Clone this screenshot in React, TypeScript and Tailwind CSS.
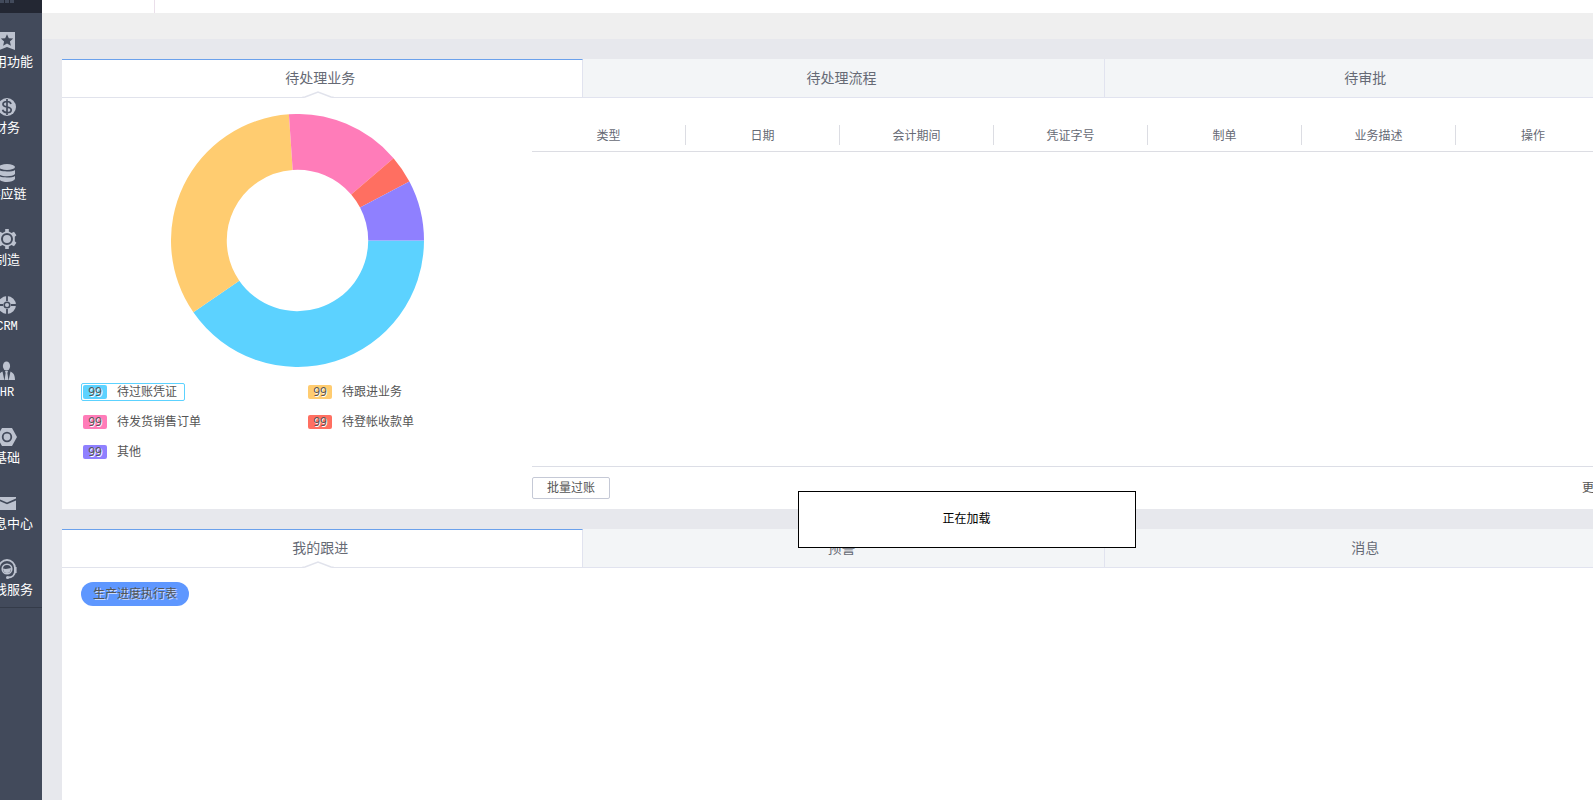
import type { ReactNode } from "react";

const slices = [
  { label: "待过账凭证", value: 1454, color: "#5cd2ff", badge: "bg-[#5cd2ff]" },
  { label: "待跟进业务", value: 1207, color: "#ffcc70", badge: "bg-[#ffcc70]" },
  { label: "待发货销售订单", value: 533, color: "#ff7cb9", badge: "bg-[#ff7cb9]" },
  { label: "待登帐收款单", value: 128, color: "#ff6f61", badge: "bg-[#ff6f61]" },
  { label: "其他", value: 278, color: "#8f80ff", badge: "bg-[#8f80ff]" },
];

const columns = ["类型", "日期", "会计期间", "凭证字号", "制单", "业务描述", "操作"];

const menu: { label: string; latin?: boolean; icon: ReactNode }[] = [
  {
    label: "常用功能",
    icon: (
      <path
        fillRule="evenodd"
        d="M2 1h16v18l-8-3-8 3zM10 3.200 8.200 7.200l-4.400.4 3.300 2.900-1 4.300L10 12.500l3.900 2.300-1-4.300 3.300-2.900-4.400-.4z"
      />
    ),
  },
  {
    label: "财务",
    icon: (
      <>
        <circle cx="10" cy="10" r="9" />
        <path
          d="M14 7c-.4-1.700-1.800-2.500-4-2.500S6 5.500 6 7.200s1.500 2.300 4 2.800 4.200 1.100 4.200 2.900-1.700 2.700-4.200 2.700-4-1-4.400-2.800M10 2v16"
          fill="none"
          stroke="#424a5b"
          strokeWidth="1.7"
        />
      </>
    ),
  },
  {
    label: "供应链",
    icon: (
      <>
        <ellipse cx="10" cy="4" rx="8" ry="3" />
        <path d="M2 7c2 2 14 2 16 0v4c-2 3-14 3-16 0z" />
        <path d="M2 13c2 2 14 2 16 0v3c-2 4-14 4-16 0z" />
      </>
    ),
  },
  {
    label: "制造",
    icon: (
      <>
        <path
          fillRule="evenodd"
          d="M8.200 0h3.600v2.400l2.700 1.500L17 2.800l2.400 3.400-1.600 1.600v4.400l1.600 1.600L17 17.200l-2.500-1.100-2.700 1.500V20H8.200v-2.400l-2.700-1.500L3 17.200.6 13.800l1.600-1.600V7.800L.6 6.200 3 2.800l2.500 1.100 2.700-1.500zM10 4a6 6 0 1 0 0 12 6 6 0 0 0 0-12z"
        />
        <circle cx="10" cy="10" r="4" />
      </>
    ),
  },
  {
    label: "CRM",
    latin: true,
    icon: (
      <>
        <circle cx="10" cy="10" r="6.3" fill="none" stroke="#bcc2cf" strokeWidth="5.4" />
        <path d="M10 0v6M10 14v6M0 10h6M14 10h6" stroke="#424a5b" strokeWidth="1.8" />
        <circle cx="10" cy="10" r="2" />
      </>
    ),
  },
  {
    label: "HR",
    latin: true,
    icon: (
      <>
        <ellipse cx="9.5" cy="5" rx="3.6" ry="4.6" />
        <path d="M8 10h3l-.6 2 1 7H7.600l1-7z" />
        <path d="M5.500 10.500 7.300 19H1c0-4 1-7 4.500-8.500zM13.500 10.500 11.700 19H18c0-4-1-7-4.500-8.500z" />
      </>
    ),
  },
  {
    label: "基础",
    icon: (
      <>
        <path fillRule="evenodd" d="M5 1h10l5 9-5 9H5l-5-9zM10 4.800a5.200 5.200 0 1 0 0 10.400 5.200 5.200 0 0 0 0-10.400z" />
        <circle cx="10" cy="10" r="3.4" />
      </>
    ),
  },
  {
    label: "消息中心",
    icon: (
      <>
        <path d="M1 4h18v1.500l-9 4-9-4z" />
        <path d="M1 7.500l9 3.700 9-3.700V17H1z" />
      </>
    ),
  },
  {
    label: "在线服务",
    icon: (
      <>
        <path d="M2 12V9a8 8 0 0 1 16 0v3M18 12c0 4-3 6.500-7 6.500" fill="none" stroke="#bcc2cf" strokeWidth="1.8" />
        <path d="M17 8h2.600v6H17zM.4 8H3v6H.4z" />
        <circle cx="10" cy="10" r="4.8" fill="none" stroke="#bcc2cf" strokeWidth="1.6" />
        <path d="M6 9.500c3 1 6 0 8-.5 0 3-1.500 5-4 5s-4-2-4-4.500z" />
        <circle cx="10.5" cy="18.5" r="1.5" />
      </>
    ),
  },
];

function Donut() {
  const total = slices.reduce((sum, s) => sum + s.value, 0);
  const outer = 127;
  const inner = 71;
  let start = 0;
  return (
    <svg width="253" height="253" viewBox="-127 -127 254 254" role="img" aria-label="待处理业务" className="mx-auto">
      {slices.map((s) => {
        const end = start + (s.value / total) * Math.PI * 2;
        const large = end - start > Math.PI ? 1 : 0;
        const at = (r: number, a: number) => `${r * Math.cos(a)} ${r * Math.sin(a)}`;
        const d = `M${at(outer, start)}A${outer} ${outer} 0 ${large} 1 ${at(outer, end)}L${at(inner, end)}A${inner} ${inner} 0 ${large} 0 ${at(inner, start)}Z`;
        start = end;
        return <path key={s.label} d={d} fill={s.color} />;
      })}
    </svg>
  );
}

function Tabs({ items }: { items: string[] }) {
  return (
    <div role="tablist" className="grid h-[39px] grid-cols-3 text-sm text-[#666a75]">
      {items.map((item, i) =>
        i === 0 ? (
          <button
            key={item}
            role="tab"
            aria-selected="true"
            className="relative border-t border-r border-b border-t-[#6ba1ec] border-r-[#e1e3ef] border-b-[#e1e3ec] bg-white pr-1 pb-0.5"
          >
            {item}
            <svg width="32" height="7" viewBox="0 0 32 7" className="absolute -bottom-px left-1/2 -ml-5">
              <path d="M0 6.500 16 .8 32 6.500V7H0z" fill="#fff" />
              <path d="M0 6.500 3 6 16 1l13 5 3 .5" fill="none" stroke="#e1e3ec" strokeWidth="1.5" />
            </svg>
          </button>
        ) : (
          <button
            key={item}
            role="tab"
            aria-selected="false"
            className="border-r border-b border-[#e1e3ef] bg-[#f3f5f7] pr-1 last:border-r-0 last:pr-0"
          >
            {item}
          </button>
        ),
      )}
    </div>
  );
}

function Sidebar() {
  return (
    <nav className="-ml-7 w-[70px] shrink-0 bg-[#424a5b]">
      <div className="flex h-[13px] items-start justify-center gap-px bg-[#232733]">
        <span className="h-[3px] w-1 bg-[#424a5b]" />
        <span className="h-[3px] w-1 bg-[#424a5b]" />
        <span className="h-[3px] w-1 bg-[#424a5b]" />
      </div>
      <ul className="border-b border-[#343b49]">
        {menu.map((m) => (
          <li key={m.label} className="h-[66px]">
            <a href="#" className="flex h-full flex-col items-center pt-[18px] text-[13px] leading-5 whitespace-nowrap text-white">
              <svg width="20" height="20" viewBox="0 0 20 20" fill="#bcc2cf" aria-hidden="true">
                {m.icon}
              </svg>
              <span className={m.latin ? "font-['Liberation_Mono',monospace] text-xs leading-6" : ""}>{m.label}</span>
            </a>
          </li>
        ))}
      </ul>
    </nav>
  );
}

export default function App() {
  return (
    <div className="relative flex h-screen overflow-hidden bg-[#e7e8ed] font-['Noto_Sans','Noto_Sans_CJK_SC',sans-serif] text-xs text-[#555]">
      <Sidebar />
      <div className="flex min-w-0 flex-1 flex-col">
        <header>
          <div className="h-[13px] bg-white">
            <div className="h-full w-[113px] border-r border-[#eadfea]" />
          </div>
          <div className="h-[26px] bg-[#efefef]" />
        </header>

        {/* The dashboard runs past the right edge of the window */}
        <main className="-mr-[33px] flex flex-1 flex-col gap-5 pt-5 pl-5">
          <section className="bg-white">
            <Tabs items={["待处理业务", "待处理流程", "待审批"]} />
            <div className="flex h-[411px] pr-4">
              <div className="w-[470px] shrink-0 pt-4">
                <Donut />
                <ul className="mt-4 ml-[19px] grid grid-cols-[225px_225px] gap-y-3">
                  {slices.map((s, i) => (
                    <li key={s.label}>
                      <a
                        href="#"
                        className={`inline-flex h-[18px] items-center gap-2.5 rounded-xs border pr-[7px] pl-px align-top ${i === 0 ? "border-[#5cd2ff]" : "border-transparent"}`}
                      >
                        <span
                          className={`h-3.5 w-6 rounded-xs text-center leading-3.5 [text-shadow:1px_1px_0_#fff] ${s.badge}`}
                        >
                          99
                        </span>
                        {s.label}
                      </a>
                    </li>
                  ))}
                </ul>
              </div>

              <div className="flex flex-1 flex-col pt-[27px]">
                <table className="w-full table-fixed border-b border-[#dcdde3] text-[#666a75]">
                  <thead>
                    <tr>
                      {columns.map((c) => (
                        <th key={c} className="group h-[26px] p-0 align-top font-normal">
                          <div className="h-5 border-r border-[#dcdde3] leading-[22px] group-last:border-r-0">{c}</div>
                        </th>
                      ))}
                    </tr>
                  </thead>
                </table>
                <div className="flex-1" />
                <div className="flex h-[43px] items-start justify-between border-t border-[#dcdee6] pt-2.5 pr-1">
                  <button className="h-[22px] w-[78px] rounded-xs border border-[#c5c9d6] bg-white">批量过账</button>
                  <a href="#" className="leading-[22px]">
                    更多
                  </a>
                </div>
              </div>
            </div>
          </section>

          <section className="flex-1 bg-white">
            <Tabs items={["我的跟进", "预警", "消息"]} />
            <div className="px-[19px] py-3.5">
              <button className="h-6 rounded-full bg-[#5e97ff] px-3 [text-shadow:1px_1px_0_#c9dcff]">生产进度执行表</button>
            </div>
          </section>
        </main>
      </div>

      <div
        role="status"
        className="absolute top-[491px] left-1/2 ml-px flex h-[57px] w-[338px] items-center justify-center border border-black bg-white pb-0.5 text-black"
      >
        正在加载
      </div>
    </div>
  );
}
